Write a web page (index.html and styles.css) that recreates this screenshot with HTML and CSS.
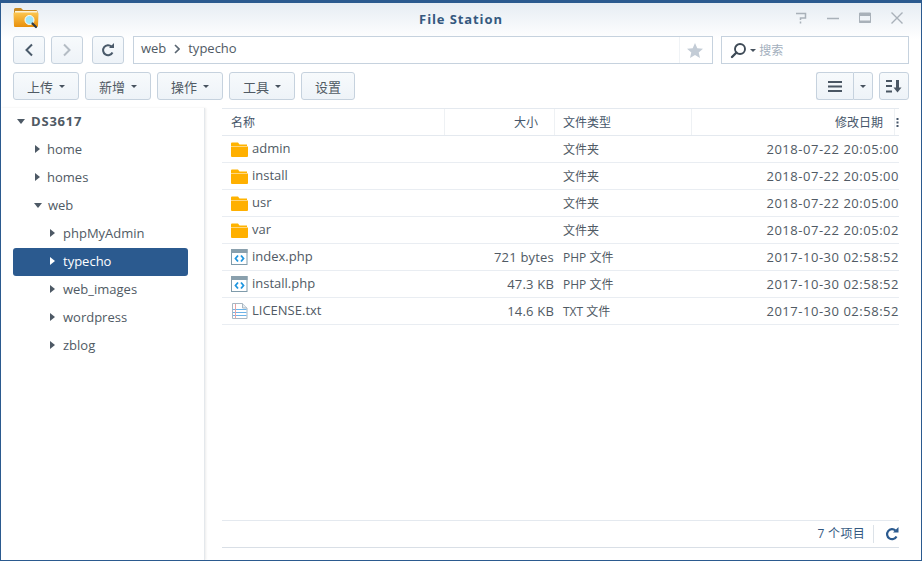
FILE: index.html
```html
<!DOCTYPE html>
<html lang="zh">
<head>
<meta charset="utf-8">
<title>File Station</title>
<link rel="stylesheet" href="styles.css">
</head>
<body>
<div class="window">
  <header class="titlebar">
    <svg class="app-icon" width="26" height="22" viewBox="0 0 26 22">
      <defs><linearGradient id="fg" x1="0" y1="0" x2="0" y2="1"><stop offset="0" stop-color="#fcc650"/><stop offset="1" stop-color="#e8900c"/></linearGradient></defs>
      <path d="M1 4V2.500Q1 1 2.500 1H8l2 2h13q1.500 0 1.500 1.500V6H1z" fill="#c98a22"/>
      <rect x="2" y="4" width="22" height="3" fill="#fdf3d8"/>
      <path d="M0.500 6.500Q0.500 5.500 1.500 5.500H24.500Q25.500 5.500 25.500 6.500L25 19Q25 20 24 20H2Q1 20 1 19z" fill="url(#fg)"/>
      <circle cx="16.500" cy="13" r="4.500" fill="#9fe6fa" stroke="#fff" stroke-width="1"/>
      <path d="M19.500 16.500l3.500 3.500" stroke="#2f3a44" stroke-width="2.200" stroke-linecap="round"/>
    </svg>
    <div class="title">File Station</div>
    <div class="win-controls">
      <svg width="12" height="12" viewBox="0 0 12 12"><path d="M1 1.500H10.500V6H5.500V8M5.500 9.500V11.500" fill="none" stroke="#a9b1b9" stroke-width="1.500"/></svg>
      <svg width="12" height="12" viewBox="0 0 12 12"><path d="M0 6.500H12" stroke="#a9b1b9" stroke-width="1.500"/></svg>
      <svg width="12" height="12" viewBox="0 0 12 12"><path d="M0.500 1H11.500V10.500H0.500z" fill="none" stroke="#a9b1b9"/><rect x="0" y="1" width="12" height="3" fill="#a9b1b9"/><rect x="0" y="8.500" width="12" height="2" fill="#a9b1b9"/></svg>
      <svg width="12" height="12" viewBox="0 0 12 12"><path d="M0.500 0.500L11.500 11.500M11.500 0.500L0.500 11.500" stroke="#a9b1b9" stroke-width="1.400"/></svg>
    </div>
  </header>

  <div class="toolbar">
    <button class="btn square"><svg width="10" height="14" viewBox="0 0 10 14"><path d="M8 1.500L2.500 7 8 12.500" fill="none" stroke="#4a5a6a" stroke-width="2"/></svg></button>
    <button class="btn square"><svg width="10" height="14" viewBox="0 0 10 14"><path d="M2 1.500L7.500 7 2 12.500" fill="none" stroke="#b4bcc4" stroke-width="2"/></svg></button>
    <button class="btn square refresh"><svg width="14" height="14" viewBox="0 0 14 14"><path d="M11.500 9.500A5 5 0 1 1 10.500 3.500" fill="none" stroke="#4a5a6a" stroke-width="2"/><path d="M8 5H13V0z" fill="#4a5a6a"/></svg></button>
    <div class="path">
      <span class="crumb">web</span>
      <svg class="crumb-sep" width="6" height="10" viewBox="0 0 6 10"><path d="M1 1l4 4-4 4" fill="none" stroke="#5a6672" stroke-width="1.600"/></svg>
      <span class="crumb">typecho</span>
      <span class="star-box"><svg width="16" height="15" viewBox="0 0 16 15"><path d="M8 0l2.300 5.200 5.700.5-4.300 3.700 1.300 5.600L8 12l-5 3 1.300-5.600L0 5.700l5.700-.5z" fill="#c3ccd6"/></svg></span>
    </div>
    <div class="search">
      <svg width="17" height="17" viewBox="0 0 17 17"><circle cx="10" cy="7" r="5" fill="none" stroke="#3e4a56" stroke-width="1.900"/><path d="M6.500 10.500L2 15" stroke="#3e4a56" stroke-width="2.400" stroke-linecap="round"/></svg>
      <i class="caret"></i>
      <span class="search-text">搜索</span>
    </div>
  </div>

  <div class="toolbar second">
    <button class="btn menu">上传<i class="caret"></i></button>
    <button class="btn menu">新增<i class="caret"></i></button>
    <button class="btn menu">操作<i class="caret"></i></button>
    <button class="btn menu">工具<i class="caret"></i></button>
    <button class="btn menu plain">设置</button>
    <div class="view-tools">
      <div class="split">
        <button class="btn view"><svg width="14" height="11" viewBox="0 0 14 11"><path d="M0 1H14M0 5.500H14M0 10H14" stroke="#4a5663" stroke-width="2"/></svg></button>
        <button class="btn view-caret"><i class="caret"></i></button>
      </div>
      <button class="btn sort"><svg width="16" height="13" viewBox="0 0 16 13"><path d="M0 1H6M0 6H6M0 11.500H6" stroke="#4a5663" stroke-width="2"/><path d="M11.500 0V8" stroke="#4a5663" stroke-width="3"/><path d="M7.500 7.500H15.500L11.500 12.500z" fill="#4a5663"/></svg></button>
    </div>
  </div>

  <div class="main">
    <nav class="sidebar">
      <div class="node root"><i class="tri down"></i>DS3617</div>
      <div class="node l1"><i class="tri"></i>home</div>
      <div class="node l1"><i class="tri"></i>homes</div>
      <div class="node l1"><i class="tri down"></i>web</div>
      <div class="node l2"><i class="tri"></i>phpMyAdmin</div>
      <div class="node l2 selected"><i class="tri"></i>typecho</div>
      <div class="node l2"><i class="tri"></i>web_images</div>
      <div class="node l2"><i class="tri"></i>wordpress</div>
      <div class="node l2"><i class="tri"></i>zblog</div>
    </nav>
    <section class="content">
      <div class="thead">
        <div class="c name">名称</div>
        <div class="c size">大小</div>
        <div class="c type">文件类型</div>
        <div class="c date">修改日期</div>
        <div class="c more"><svg width="3" height="9" viewBox="0 0 3 9"><path d="M0.500 0h2v2h-2zM0.500 3.500h2v2h-2zM0.500 7h2v2h-2z" fill="#46566a"/></svg></div>
      </div>
      <div class="tbody">
        <div class="row"><div class="c name"><svg class="ic" width="17" height="15"><use href="#folder"/></svg>admin</div><div class="c size"></div><div class="c type">文件夹</div><div class="c date">2018-07-22 20:05:00</div></div>
        <div class="row"><div class="c name"><svg class="ic" width="17" height="15"><use href="#folder"/></svg>install</div><div class="c size"></div><div class="c type">文件夹</div><div class="c date">2018-07-22 20:05:00</div></div>
        <div class="row"><div class="c name"><svg class="ic" width="17" height="15"><use href="#folder"/></svg>usr</div><div class="c size"></div><div class="c type">文件夹</div><div class="c date">2018-07-22 20:05:00</div></div>
        <div class="row"><div class="c name"><svg class="ic" width="17" height="15"><use href="#folder"/></svg>var</div><div class="c size"></div><div class="c type">文件夹</div><div class="c date">2018-07-22 20:05:02</div></div>
        <div class="row"><div class="c name"><svg class="ic" width="17" height="16"><use href="#php"/></svg>index.php</div><div class="c size">721 bytes</div><div class="c type">PHP 文件</div><div class="c date">2017-10-30 02:58:52</div></div>
        <div class="row"><div class="c name"><svg class="ic" width="17" height="16"><use href="#php"/></svg>install.php</div><div class="c size">47.3 KB</div><div class="c type">PHP 文件</div><div class="c date">2017-10-30 02:58:52</div></div>
        <div class="row"><div class="c name"><svg class="ic" width="17" height="16"><use href="#txt"/></svg>LICENSE.txt</div><div class="c size">14.6 KB</div><div class="c type">TXT 文件</div><div class="c date">2017-10-30 02:58:52</div></div>
      </div>
      <footer class="status">
        <span class="count">7 个项目</span>
        <span class="status-refresh"><svg width="14" height="14" viewBox="0 0 14 14"><path d="M11.500 9.500A5 5 0 1 1 10.500 3.500" fill="none" stroke="#2b5a8f" stroke-width="2.200"/><path d="M8 5.500H13.500V0z" fill="#2b5a8f"/></svg></span>
      </footer>
    </section>
  </div>
</div>
<svg class="defs" width="0" height="0">
  <symbol id="folder" viewBox="0 0 17 15">
    <path d="M0 3V1.500Q0 .5 1 .5H7L8.500 2.500H16V4H0z" fill="#ffb300"/>
    <path d="M0 4.500H17V14Q17 15 16 15H1Q0 15 0 14z" fill="#ffb000"/>
  </symbol>
  <symbol id="php" viewBox="0 0 17 16">
    <rect x=".5" y=".5" width="15.500" height="15" fill="#fff" stroke="#7f9bab"/>
    <rect x="0" y="0" width="16.500" height="4" fill="#8aa0ad"/>
    <path d="M7 6.500L4.500 9.500 7 12.500M10 6.500L12.500 9.500 10 12.500" fill="none" stroke="#1e96e0" stroke-width="1.800"/>
  </symbol>
  <symbol id="txt" viewBox="0 0 17 16">
    <path d="M1.500.5H11.500L16 5V15.500H1.500z" fill="#fff" stroke="#a9b7c2"/>
    <path d="M2 6.500H15.500M2 9.500H15.500M2 12.500H15.500" stroke="#6db3e8"/>
    <path d="M4.500 1V15" stroke="#eaa3a3"/>
    <path d="M11.500.5V5H16" fill="#e6ebef" stroke="#a9b7c2"/>
  </symbol>
</svg>
</body>
</html>
```
FILE: styles.css
```css
* { box-sizing: border-box; }
html, body { margin: 0; height: 100%; }
body { font-family: "Open Sans", "Noto Sans CJK SC", sans-serif; font-size: 13px; color: #505a64; background: #fff; }
.defs { position: absolute; }
.window { width: 922px; height: 561px; display: flex; flex-direction: column; border: 1px solid #2b5a8f; border-top-width: 3px; background: linear-gradient(#e6edf3 0, #fff 36px, #fff 100%) no-repeat; overflow: hidden; }
.titlebar { height: 33px; flex: none; display: flex; align-items: center; position: relative; padding: 0 18px 0 12px; }
.app-icon { flex: none; margin-top: -4px; }
.title { position: absolute; left: 0; right: 0; top: 8px; text-align: center; font-size: 13px; font-weight: 700; letter-spacing: .9px; color: #35597f; line-height: 16px; }
.win-controls { margin-left: auto; display: flex; gap: 20px; margin-top: -3px; }
.toolbar { height: 28px; flex: none; display: flex; padding: 0 12px; align-items: stretch; }
.toolbar.second { margin-top: 8px; }
.btn { font: inherit; color: #505a64; background: linear-gradient(#f7fafc, #eef3f8); border: 1px solid #c6d2de; border-radius: 3px; padding: 0; display: flex; align-items: center; justify-content: center; }
.square { width: 32px; margin-right: 6px; }
.refresh { margin-left: 3px; margin-right: 9px; }
.path { width: 581px; border: 1px solid #c6d2de; display: flex; align-items: center; padding-left: 7px; background: #fff; color: #505a64; padding-bottom: 4px; }
.crumb-sep { margin: 2px 8px 0 8px; }
.star-box { margin-left: auto; width: 33px; height: 26px; margin-bottom: -4px; padding-right: 3px; display: flex; align-items: center; justify-content: center; border-left: 1px solid #f0f3f6; }
.search { width: 188px; margin-left: 8px; border: 1px solid #c6d2de; display: flex; align-items: center; padding-left: 8px; background: #fff; }
.search-text { color: #a3afbd; font-size: 12px; margin-left: 3px; }
.caret { display: inline-block; width: 0; height: 0; border: 3px solid transparent; border-top: 3.500px solid #47525e; border-bottom: 0; margin-left: 6px; }
.search .caret { margin-left: 3px; }
.menu { width: 66px; margin-right: 6px; }
.menu.plain { width: 54px; }
.view-tools { margin-left: auto; display: flex; gap: 6px; }
.split { display: flex; }
.view { width: 37px; border-radius: 3px 0 0 3px; border-right: 0; }
.view-caret { width: 20px; border-radius: 0 3px 3px 0; }
.view-caret .caret { margin-left: 0; }
.sort { width: 30px; }
.main { flex: 1; display: flex; margin-top: 8px; min-height: 0; }
.sidebar { width: 204px; flex: none; border-right: 1px solid #e4e8ec; box-shadow: 1px 0 2px rgba(0,0,0,.08); padding: 0 16px 0 12px; }
.node { height: 28px; padding-bottom: 2px; display: flex; align-items: center; white-space: nowrap; }
.root { font-weight: 700; padding-left: 4px; letter-spacing: .8px; color: #505a64; }
.l1 { padding-left: 22px; }
.l2 { padding-left: 37px; }
.tri { width: 0; height: 0; flex: none; border: 4px solid transparent; border-left: 5px solid #4d5965; border-right: 0; margin-right: 8px; }
.l1 .tri { margin-right: 7px; }
.tri.down { border: 4px solid transparent; border-top: 5px solid #4d5965; border-bottom: 0; margin-right: 6px; margin-left: -1px; }
.root .tri.down { margin-left: 0; margin-right: 6px; }
.selected { background: #2b5a8f; color: #fff; border-radius: 3px; }
.selected .tri { border-left-color: #fff; }
.content { flex: 1; display: flex; flex-direction: column; margin-left: 17px; margin-right: 22px; min-width: 0; }
.thead { height: 28px; flex: none; display: flex; border-top: 1px solid #e4e9ef; border-bottom: 1px solid #e4e9ef; align-items: stretch; color: #46566a; font-size: 12px; }
.row { height: 27px; display: flex; border-bottom: 1px solid #e9edf2; align-items: center; }
.c { white-space: nowrap; }
.name { width: 223px; padding-left: 9px; display: flex; align-items: center; flex: none; }
.size { width: 110px; text-align: right; padding-right: 16px; flex: none; }
.row .size { padding-right: 1px; letter-spacing: .2px; }
.type { width: 137px; flex: none; padding-left: 8px; font-size: 12px; }
.date { width: 203px; flex: none; text-align: right; }
.row .date { width: 207px; letter-spacing: .52px; }
.row .name { padding-bottom: 2px; }
.thead .c { border-right: 1px solid #eef1f4; display: flex; align-items: center; }
.thead .size { justify-content: flex-end; }
.thead .date { justify-content: flex-end; padding-right: 11px; }
.thead .more { flex: 1; border-right: 0; justify-content: center; }
.ic { flex: none; margin-right: 4px; margin-top: 2px; }
.tbody { flex: 1; }
.status { height: 28px; flex: none; border-top: 1px solid #e4e9ef; border-bottom: 1px solid #d9dfe6; display: flex; align-items: center; justify-content: flex-end; color: #33587f; font-size: 12px; margin-bottom: 12px; }
.count { letter-spacing: .3px; margin-bottom: 2px; }
.status-refresh { width: 26px; height: 18px; margin-left: 8px; border-left: 1px solid #dce2e8; display: flex; align-items: center; justify-content: flex-end; }
```
